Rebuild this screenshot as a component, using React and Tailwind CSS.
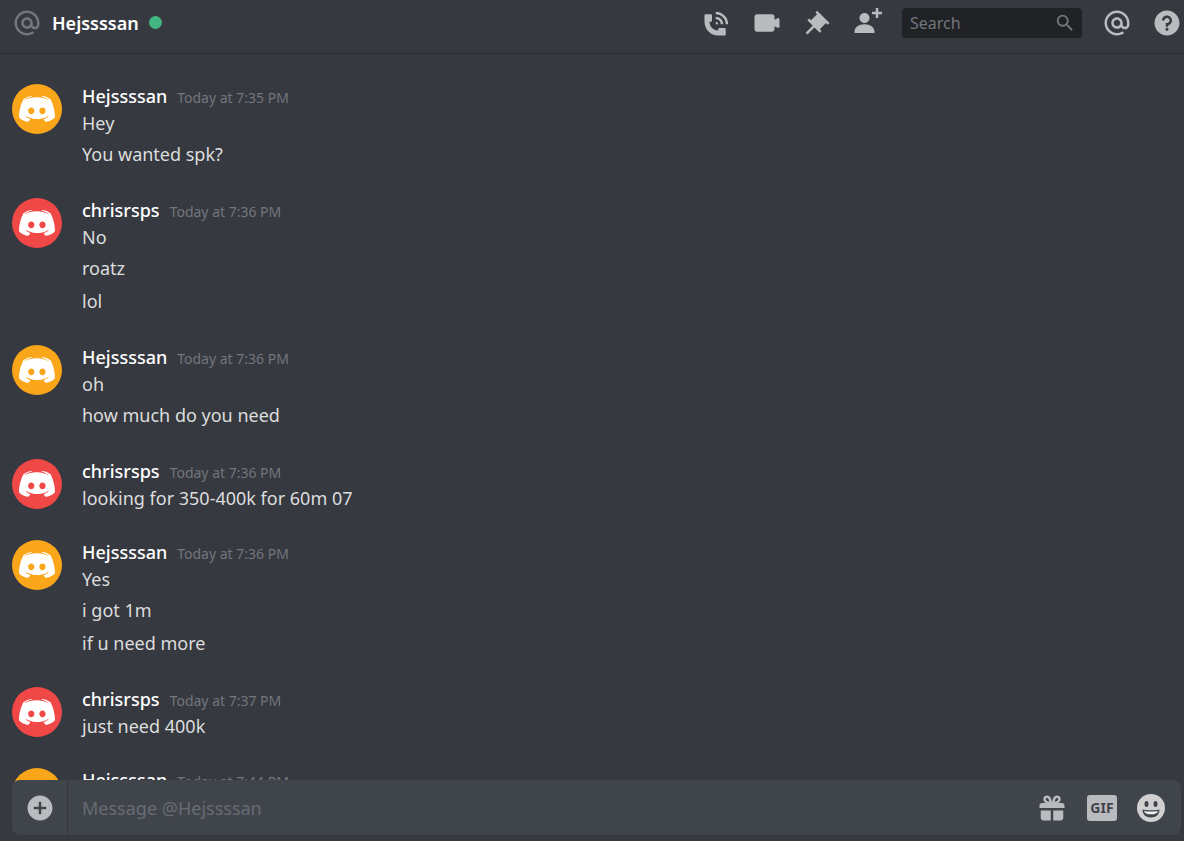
import { useState } from 'react';

const icons = {
  at: 'M12 2C6.486 2 2 6.486 2 12C2 17.515 6.486 22 12 22C14.039 22 15.993 21.398 17.652 20.259L16.521 18.611C15.195 19.519 13.633 20 12 20C7.589 20 4 16.411 4 12C4 7.589 7.589 4 12 4C16.411 4 20 7.589 20 12V12.782C20 14.17 19.402 15 18.4 15L18.398 15.018C18.338 15.005 18.273 15 18.209 15H18C17.437 15 16.6 14.182 16.6 13.631V12C16.6 9.464 14.537 7.4 12 7.4C9.463 7.4 7.4 9.463 7.4 12C7.4 14.537 9.463 16.6 12 16.6C13.234 16.6 14.35 16.106 15.177 15.313C15.826 16.269 16.93 17 18 17L18.002 16.981C18.064 16.994 18.129 17 18.195 17H18.4C20.552 17 22 15.306 22 12.782V12C22 6.486 17.514 2 12 2ZM12 14.599C10.566 14.599 9.4 13.433 9.4 11.999C9.4 10.565 10.566 9.399 12 9.399C13.434 9.399 14.6 10.565 14.6 11.999C14.6 13.433 13.434 14.599 12 14.599Z',
  call: 'M11 5V3C16.515 3 21 7.486 21 13H19C19 8.589 15.411 5 11 5ZM17 13H15C15 10.795 13.206 9 11 9V7C14.309 7 17 9.691 17 13ZM11 11V13H13C13 11.896 12.105 11 11 11ZM14 16H18C18.553 16 19 16.447 19 17V21C19 21.553 18.553 22 18 22H13C6.925 22 2 17.075 2 11V6C2 5.447 2.448 5 3 5H7C7.553 5 8 5.447 8 6V10C8 10.553 7.553 11 7 11H6C6.063 14.938 9 18 13 18V17C13 16.447 13.447 16 14 16Z',
  video: 'M21.526 8.149C21.231 7.966 20.862 7.951 20.553 8.105L18 9.382V7C18 5.897 17.103 5 16 5H4C2.897 5 2 5.897 2 7V17C2 18.104 2.897 19 4 19H16C17.103 19 18 18.104 18 17V14.618L20.553 15.894C20.694 15.965 20.847 16 21 16C21.183 16 21.365 15.949 21.526 15.851C21.82 15.668 22 15.347 22 15V9C22 8.653 21.82 8.332 21.526 8.149Z',
  pin: 'M22 12L12.101 2.10101L10.686 3.51401L12.101 4.92901L7.15096 9.87801V9.88001L5.73596 8.46501L4.32196 9.88001L8.56496 14.122L2.90796 19.778L4.32196 21.192L9.97896 15.536L14.222 19.778L15.636 18.364L14.222 16.95L19.171 12H19.172L20.586 13.414L22 12Z',
  addFriend: 'M21 3H24V5H21V8H19V5H16V3H19V0H21V3ZM10 12C12.205 12 14 10.205 14 8C14 5.795 12.205 4 10 4C7.795 4 6 5.795 6 8C6 10.205 7.795 12 10 12ZM10 13C5.289 13 2 15.467 2 19V20H18V19C18 15.467 14.711 13 10 13Z',
  search: 'M15.5 14h-.79l-.28-.27A6.471 6.471 0 0 0 16 9.5 6.5 6.5 0 1 0 9.5 16c1.61 0 3.09-.59 4.23-1.57l.27.28v.79l5 4.99L20.49 19l-4.99-5zm-6 0C7.01 14 5 11.99 5 9.5S7.01 5 9.5 5 14 7.01 14 9.5 11.99 14 9.5 14z',
  help: 'M12 2C6.486 2 2 6.487 2 12C2 17.515 6.486 22 12 22C17.514 22 22 17.515 22 12C22 6.487 17.514 2 12 2ZM12 18.25C11.31 18.25 10.75 17.691 10.75 17C10.75 16.31 11.31 15.75 12 15.75C12.69 15.75 13.25 16.31 13.25 17C13.25 17.691 12.69 18.25 12 18.25ZM13 13.875V15H11V12H12C13.104 12 14 11.103 14 10C14 8.896 13.104 8 12 8C10.896 8 10 8.896 10 10H8C8 7.795 9.795 6 12 6C14.205 6 16 7.795 16 10C16 11.861 14.723 13.429 13 13.875Z',
  plus: 'M12 2C6.486 2 2 6.486 2 12C2 17.515 6.486 22 12 22C17.514 22 22 17.515 22 12C22 6.486 17.514 2 12 2ZM17 13H13V17H11V13H7V11H11V7H13V11H17V13Z',
  gift: 'M16.886 7.999H20C21.104 7.999 22 8.896 22 9.999V11.999H2V9.999C2 8.896 2.897 7.999 4 7.999H7.114C6.663 7.764 6.236 7.477 5.879 7.121C4.709 5.951 4.709 4.048 5.879 2.879C7.012 1.746 8.986 1.746 10.121 2.877C11.758 4.514 11.979 7.595 11.998 7.941L11.99 7.999H12.01L12.002 7.941C12.022 7.595 12.242 4.514 13.879 2.877C15.014 1.745 16.986 1.746 18.121 2.877C19.29 4.049 19.29 5.952 18.121 7.121C17.764 7.477 17.337 7.764 16.886 7.999ZM7.293 5.707C6.903 5.316 6.903 4.682 7.293 4.292C7.481 4.103 7.732 4 8 4C8.268 4 8.519 4.103 8.707 4.292C9.297 4.882 9.641 5.94 9.825 6.822C8.945 6.639 7.879 6.293 7.293 5.707ZM14.174 6.824C14.359 5.941 14.702 4.883 15.293 4.293C15.481 4.103 15.732 4 16 4C16.268 4 16.519 4.103 16.706 4.291C17.096 4.682 17.097 5.316 16.707 5.707C16.116 6.298 15.057 6.642 14.174 6.824ZM3 13.999H11V21.999H5C3.897 21.999 3 21.102 3 19.999V13.999ZM13 13.999V21.999H19C20.104 21.999 21 21.102 21 19.999V13.999H13Z',
};

const groups = [
  { author: 'Hejssssan', time: 'Today at 7:35 PM', lines: ['Hey', 'You wanted spk?'] },
  { author: 'chrisrsps', time: 'Today at 7:36 PM', lines: ['No', 'roatz', 'lol'] },
  { author: 'Hejssssan', time: 'Today at 7:36 PM', lines: ['oh', 'how much do you need'] },
  { author: 'chrisrsps', time: 'Today at 7:36 PM', lines: ['looking for 350-400k for 60m 07'] },
  { author: 'Hejssssan', time: 'Today at 7:36 PM', lines: ['Yes', 'i got 1m', 'if u need more'] },
  { author: 'chrisrsps', time: 'Today at 7:37 PM', lines: ['just need 400k'] },
  { author: 'Hejssssan', time: 'Today at 7:44 PM', lines: [] },
];

const avatarColors = {
  Hejssssan: 'bg-[#faa61a]',
  chrisrsps: 'bg-[#f04747]',
};

const Icon = ({ name, className = 'size-[30px]' }) => (
  <svg viewBox="0 0 24 24" fill="currentColor" fillRule="evenodd" aria-hidden="true" className={className}>
    <path d={icons[name]} />
  </svg>
);

const IconButton = ({ label, name }) => (
  <button type="button" aria-label={label} className="shrink-0 cursor-pointer hover:text-white">
    <Icon name={name} />
  </button>
);

const Avatar = ({ author }) => (
  <div className={`flex size-[50px] shrink-0 items-center justify-center rounded-full text-white ${avatarColors[author]}`}>
    <svg viewBox="0 0 28 20" fill="currentColor" aria-hidden="true" className="w-9">
      <path d="M20.6644 20C20.6644 20 19.8014 18.9762 19.0822 18.0714C22.2226 17.1905 23.4212 15.2381 23.4212 15.2381C22.4384 15.881 21.5034 16.3334 20.6644 16.6429C19.4658 17.1429 18.3151 17.4762 17.1884 17.6667C14.887 18.0953 12.7774 17.9762 10.9795 17.6429C9.61301 17.381 8.43836 17 7.45548 16.6191C6.90411 16.4048 6.30479 16.1429 5.70548 15.8096C5.63356 15.7619 5.56164 15.7381 5.48973 15.6905C5.44178 15.6667 5.41781 15.6429 5.39384 15.6191C4.96233 15.381 4.7226 15.2143 4.7226 15.2143C4.7226 15.2143 5.87329 17.1191 8.91781 18.0238C8.19863 18.9286 7.31164 20 7.31164 20C2.0137 19.8333 0 16.381 0 16.381C0 8.7144 3.45205 2.50017 3.45205 2.50017C6.90411 -0.07123 10.1884 0.00019 10.1884 0.00019L10.4281 0.28591C6.11301 1.52399 4.12329 3.40493 4.12329 3.40493C4.12329 3.40493 4.65068 3.11921 5.53767 2.71446C8.10274 1.59542 10.1404 1.2859 10.9795 1.21447C11.1233 1.19066 11.2432 1.16685 11.387 1.16685C12.8493 0.97638 14.5034 0.92876 16.2295 1.11923C18.5068 1.38114 20.9521 2.0478 23.4452 3.40493C23.4452 3.40493 21.5514 1.61923 17.476 0.38115L17.8116 0.00019C17.8116 0.00019 21.0959 -0.07123 24.5479 2.50017C24.5479 2.50017 28 8.7144 28 16.381C28 16.381 25.9623 19.8333 20.6644 20ZM9.51712 8.88106C8.15068 8.88106 7.07192 10.0715 7.07192 11.5239C7.07192 12.9763 8.17466 14.1667 9.51712 14.1667C10.8836 14.1667 11.9623 12.9763 11.9623 11.5239C11.9863 10.0715 10.8836 8.88106 9.51712 8.88106ZM18.2671 8.88106C16.9007 8.88106 15.8219 10.0715 15.8219 11.5239C15.8219 12.9763 16.9247 14.1667 18.2671 14.1667C19.6336 14.1667 20.7123 12.9763 20.7123 11.5239C20.7123 10.0715 19.6336 8.88106 18.2671 8.88106Z" />
    </svg>
  </div>
);

const MessageGroup = ({ author, time, lines }) => (
  <li className="flex min-h-[50px] gap-5">
    <Avatar author={author} />
    <div className="min-w-0">
      <div className="flex h-6 items-baseline gap-[10px]">
        <h2 className="text-lg leading-6 font-medium text-white">{author}</h2>
        <time className="text-sm leading-5 text-[#72767d]">{time}</time>
      </div>
      {lines.map((line, i) => (
        <p key={line} className={`text-lg text-[#dcddde] ${i === 0 ? 'leading-[30px]' : 'leading-[33px]'}`}>
          {line}
        </p>
      ))}
    </div>
  </li>
);

const Header = () => (
  <header className="flex h-[54px] shrink-0 items-center gap-5 border-b border-[#2b2d32] pr-[2px] pb-2 pl-3 text-[#b9bbbe]">
    <div className="flex flex-1 items-center gap-[10px]">
      <Icon name="at" className="size-[30px] text-[#72767d]" />
      <h1 className="text-lg leading-6 font-semibold text-white">Hejssssan</h1>
      <span role="img" aria-label="Online" className="size-[13px] rounded-full bg-[#43b581]" />
    </div>
    <IconButton label="Start voice call" name="call" />
    <IconButton label="Start video call" name="video" />
    <IconButton label="Pinned messages" name="pin" />
    <IconButton label="Add friends to DM" name="addFriend" />
    <label className="flex h-[30px] w-[180px] items-center rounded bg-[#202225] pr-[6px] pl-2 text-[#72767d]">
      <input
        type="text"
        aria-label="Search"
        placeholder="Search"
        className="min-w-0 flex-1 bg-transparent text-base text-[#dcddde] outline-none placeholder:text-[#72767d]"
      />
      <Icon name="search" className="size-[22px]" />
    </label>
    <IconButton label="Mentions" name="at" />
    <IconButton label="Help" name="help" />
  </header>
);

const Composer = () => {
  const [message, setMessage] = useState('');

  return (
    <form
      onSubmit={(e) => e.preventDefault()}
      className="relative mr-[3px] mb-[6px] ml-3 -mt-2 flex h-[55px] shrink-0 items-center rounded-lg bg-[#40444b] pr-4 text-[#b9bbbe]"
    >
      <div className="flex h-full w-14 items-center justify-center border-r border-[#36393f]">
        <IconButton label="Upload a file" name="plus" />
      </div>
      <input
        type="text"
        aria-label="Message @Hejssssan"
        placeholder="Message @Hejssssan"
        value={message}
        onChange={(e) => setMessage(e.target.value)}
        className="min-w-0 flex-1 bg-transparent px-[14px] text-lg text-[#dcddde] outline-none placeholder:text-[#686c73]"
      />
      <div className="flex items-center gap-5">
        <IconButton label="Send a gift" name="gift" />
        <button
          type="button"
          aria-label="GIF"
          className="flex h-[26px] w-[30px] items-center justify-center rounded-[3px] bg-[#b9bbbe] text-sm font-bold text-[#40444b]"
        >
          GIF
        </button>
        <button type="button" aria-label="Select emoji" className="text-[#d0d0d0]">
          <svg viewBox="0 0 28 28" aria-hidden="true" className="size-7">
            <circle cx="14" cy="14" r="14" fill="currentColor" />
            <ellipse cx="9.5" cy="10" rx="2" ry="3" fill="#40444b" />
            <ellipse cx="18.5" cy="10" rx="2" ry="3" fill="#40444b" />
            <path d="M5.5 15.5C8 16.5 20 16.5 22.5 15.5C22.5 20.5 19 23.5 14 23.5C9 23.5 5.5 20.5 5.5 15.5Z" fill="#40444b" />
            <path d="M7 17C11 17.8 17 17.8 21 17C20.5 19.5 18 20.3 14 20.3C10 20.3 7.5 19.5 7 17Z" fill="#f0f0f0" />
          </svg>
        </button>
      </div>
    </form>
  );
};

const App = () => (
  <div className="flex h-screen flex-col bg-[#36393f] font-['Noto_Sans','Open_Sans',sans-serif]">
    <Header />
    <main className="min-h-0 flex-1 overflow-hidden px-3 pt-[30px]">
      <ol className="flex flex-col gap-[27px]">
        {groups.map((group, i) => (
          <MessageGroup key={i} {...group} />
        ))}
      </ol>
    </main>
    <Composer />
  </div>
);

export default App;
